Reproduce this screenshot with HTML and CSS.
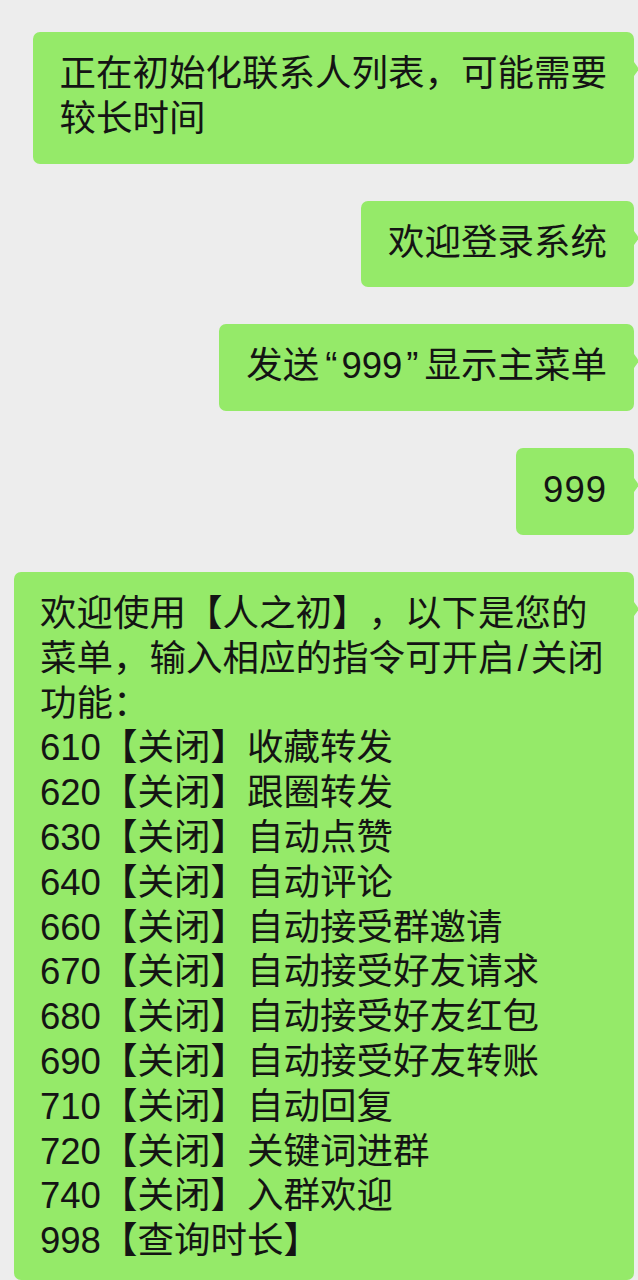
FILE: index.html
```html
<!DOCTYPE html>
<html lang="zh-CN">
<head>
<meta charset="utf-8">
<title>聊天</title>
<link rel="stylesheet" href="styles.css">
</head>
<body>
<main class="chat">
  <div class="bubble">正在初始化联系人列表，可能需要<br>较长时间</div>
  <div class="bubble">欢迎登录系统</div>
  <div class="bubble">发送<span class="q ql">“</span>999<span class="q qr">”</span>显示主菜单</div>
  <div class="bubble num">999</div>
  <div class="bubble menu">欢迎使用【人之初】，以下是您的<br>菜单，输入相应的指令可开启<span class="slash">/</span>关闭<br>功能：<br>610【关闭】收藏转发<br>620【关闭】跟圈转发<br>630【关闭】自动点赞<br>640【关闭】自动评论<br>660【关闭】自动接受群邀请<br>670【关闭】自动接受好友请求<br>680【关闭】自动接受好友红包<br>690【关闭】自动接受好友转账<br>710【关闭】自动回复<br>720【关闭】关键词进群<br>740【关闭】入群欢迎<br>998【查询时长】</div>
</main>
</body>
</html>
```
FILE: styles.css
```css
html, body {
  margin: 0;
  padding: 0;
  height: 1280px;
  overflow: hidden;
  background: #ededed;
}

.chat {
  display: flex;
  flex-direction: column;
  align-items: flex-end;
  gap: 37px;
  padding: 32px 4px 0 0;
  font-family: "Liberation Sans", "Noto Sans CJK SC", sans-serif;
  font-size: 36.5px;
  line-height: 44.8px;
  color: #141414;
  text-spacing-trim: space-all;
}

.bubble {
  position: relative;
  background: #95ea69;
  border-radius: 7px;
  padding: 20px 27px 22px 27px;
  max-width: 548px;
  white-space: nowrap;
}

.bubble::after {
  content: "";
  position: absolute;
  right: -5px;
  top: 30px;
  border-left: 5px solid #95ea69;
  border-top: 7px solid transparent;
  border-bottom: 7px solid transparent;
}

.ql {
  margin: 0 4px 0 6px;
}

.qr {
  margin: 0 6px 0 4px;
}

.slash {
  margin: 0 3px;
}

.num {
  letter-spacing: 1px;
  padding-left: 27px;
  padding-right: 27px;
}

.menu {
  align-self: stretch;
  margin-left: 14px;
  max-width: none;
  padding: 20px 26px 16px 26px;
}
```
